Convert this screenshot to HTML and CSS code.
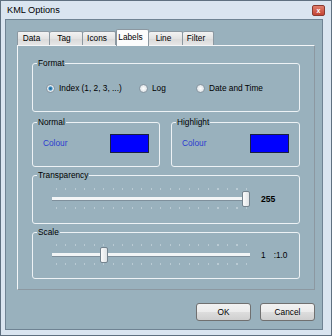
FILE: index.html
```html
<!DOCTYPE html>
<html lang="en">
<head>
    <meta charset="UTF-8">
    <title>KML Options</title>
    <link rel="stylesheet" href="styles.css">
</head>
<body>
    <div class="window">
        <div class="titlebar">
            <span class="title">KML Options</span>
            <span class="close">x</span>
        </div>
        <div class="client">
            <div class="tabs">
                <div class="tab w-data">Data</div>
                <div class="tab w-tag">Tag</div>
                <div class="tab w-icons">Icons</div>
                <div class="tab active w-labels">Labels</div>
                <div class="tab w-line">Line</div>
                <div class="tab w-filter">Filter</div>
            </div>
            <div class="panel">
                <fieldset class="group format">
                    <legend>Format</legend>
                    <div class="radios">
                        <label class="option first"><span class="radio checked"></span>Index (1, 2, 3, ...)</label>
                        <label class="option second"><span class="radio"></span>Log</label>
                        <label class="option"><span class="radio"></span>Date and Time</label>
                    </div>
                </fieldset>

                <div class="pair">
                    <fieldset class="group colour-group">
                        <legend>Normal</legend>
                        <div class="colour-row">
                            <span class="colour-label">Colour</span>
                            <span class="swatch"></span>
                        </div>
                    </fieldset>
                    <fieldset class="group colour-group">
                        <legend>Highlight</legend>
                        <div class="colour-row">
                            <span class="colour-label">Colour</span>
                            <span class="swatch"></span>
                        </div>
                    </fieldset>
                </div>

                <fieldset class="group transparency">
                    <legend>Transparency</legend>
                    <div class="slider-row">
                        <div class="slider">
                            <div class="ticks top"></div>
                            <div class="track"></div>
                            <div class="thumb" style="left: 190px;"></div>
                            <div class="ticks bottom"></div>
                        </div>
                        <span class="value bold">255</span>
                    </div>
                </fieldset>

                <fieldset class="group scale">
                    <legend>Scale</legend>
                    <div class="slider-row">
                        <div class="slider">
                            <div class="ticks top"></div>
                            <div class="track"></div>
                            <div class="thumb" style="left: 48px;"></div>
                            <div class="ticks bottom"></div>
                        </div>
                        <span class="value">1</span>
                        <span class="ratio">:1.0</span>
                    </div>
                </fieldset>
            </div>
            <div class="buttons">
                <button type="button">OK</button>
                <button type="button">Cancel</button>
            </div>
        </div>
    </div>
</body>
</html>
```

FILE: styles.css
```css
body {
    margin: 0;
    font-family: "Liberation Sans", Arial, sans-serif;
    font-size: 8.3px;
    color: #000;
    background: #fff;
}
.window {
    width: 332px;
    height: 336px;
    box-sizing: border-box;
    border: 1px solid #5f7080;
    background: #dae5f0;
    display: flex;
    flex-direction: column;
}
.titlebar {
    height: 18px;
    display: flex;
    align-items: center;
    justify-content: space-between;
    padding: 0 6px 0 6px;
}
.title {
    font-size: 9.2px;
    color: #000;
}
.close {
    width: 11px;
    height: 9px;
    background: linear-gradient(#e0806e, #c44434);
    border: 1px solid #8a3a30;
    border-radius: 2px;
    color: #fff;
    font-size: 7px;
    font-weight: bold;
    line-height: 9px;
    text-align: center;
}
.client {
    flex: 1;
    margin: 0 8px 5px 4px;
    border: 1px solid #6f8393;
    background: #99b1bd;
    padding: 9px 7px 0 11px;
}
.tabs {
    display: flex;
    align-items: flex-end;
    height: 16px;
}
.tab {
    height: 14px;
    box-sizing: border-box;
    border: 1px solid #8c98a1;
    border-bottom: none;
    border-radius: 2px 2px 0 0;
    background: linear-gradient(#f3f3f3, #e3e3e3 50%, #d9d9d9 51%, #e6e6e6);
    text-align: center;
    padding: 0 4px 0 0;
    line-height: 13px;
}
.tab + .tab {
    border-left: none;
}
.tab.active {
    height: 17px;
    margin-bottom: -1px;
    background: #fcfcfc;
    border-left: 1px solid #8c98a1;
    line-height: 15px;
    position: relative;
}
.tab.active + .tab {
    border-left: none;
}
.w-data { width: 33px; }
.w-tag { width: 33px; }
.w-icons { width: 33px; }
.w-labels { width: 33px; }
.w-line { width: 34px; }
.w-filter { width: 31px; }

.panel {
    height: 245px;
    width: 298px;
    box-sizing: border-box;
    border: 1px solid #8c98a1;
    border-top-color: #f4f6f8;
    border-left-color: #f4f6f8;
    padding-top: 12px;
    display: flex;
    flex-direction: column;
}
.group {
    margin: 0 14px;
    padding: 0;
    min-width: 0;
    border: 1px solid #edf2f5;
    border-radius: 3px;
}
legend {
    margin-left: 4px;
    padding: 0 1px;
    line-height: 11px;
}
.radios {
    height: 42px;
    box-sizing: border-box;
    padding: 0 0 4px 13px;
    display: flex;
    align-items: center;
}
.option {
    display: flex;
    align-items: center;
    gap: 4px;
}
.option.first { width: 93px; }
.option.second { width: 57px; }
.radio {
    width: 7px;
    height: 7px;
    border-radius: 50%;
    border: 1px solid #8796a1;
    background: radial-gradient(circle, #ffffff, #d3dadf);
}
.radio.checked {
    background: radial-gradient(circle, #1d5f8e 0, #3c8fc6 1.6px, #e9eef1 2.6px, #d3dadf 100%);
}
.pair {
    margin: 5px 14px 0;
    display: grid;
    grid-template-columns: 128px 129px;
    justify-content: space-between;
}
.pair .group {
    margin: 0;
}
.colour-row {
    height: 38px;
    box-sizing: border-box;
    padding: 6px 10px 0 10px;
    display: flex;
    justify-content: space-between;
    align-items: flex-start;
}
.colour-label {
    color: #2a3bd0;
    line-height: 19px;
}
.swatch {
    width: 37px;
    height: 17px;
    background: #0000ff;
    border: 1px solid #1a2040;
}
.transparency {
    margin-top: 3px;
}
.scale {
    margin-top: 3px;
}
.slider-row {
    height: 42px;
    box-sizing: border-box;
    padding: 7px 0 0 19px;
    display: flex;
    align-items: flex-start;
}
.scale .slider-row {
    height: 40px;
    padding-top: 6px;
}
.slider {
    width: 198px;
    height: 22px;
    position: relative;
}
.ticks {
    height: 2px;
    margin-left: 4px;
    width: 191px;
    background: repeating-linear-gradient(to right, #b9cad3 0 1px, transparent 1px 9.5px);
}
.track {
    height: 3px;
    margin-top: 7px;
    background: #f2f5f6;
    box-shadow: 0 1px 0 #7f909c;
}
.ticks.bottom {
    margin-top: 7px;
}
.thumb {
    position: absolute;
    top: 3px;
    width: 6px;
    height: 14px;
    background: linear-gradient(to right, #fbfbfb, #dfe3e6);
    border: 1px solid #74838e;
    border-radius: 2px;
}
.value {
    margin-left: 11px;
    line-height: 22px;
}
.value.bold {
    font-weight: bold;
    font-size: 8.6px;
}
.ratio {
    margin-left: 8px;
    line-height: 22px;
}
.buttons {
    display: flex;
    justify-content: flex-end;
    gap: 9px;
    width: 298px;
    margin-top: 13px;
}
button {
    width: 55px;
    height: 18px;
    padding: 0;
    font-family: "Liberation Sans", Arial, sans-serif;
    font-size: 8.3px;
    color: #000;
    border: 1px solid #707070;
    border-radius: 3px;
    background: linear-gradient(#f2f2f2, #ebebeb 50%, #dddddd 51%, #cfcfcf);
}
```
